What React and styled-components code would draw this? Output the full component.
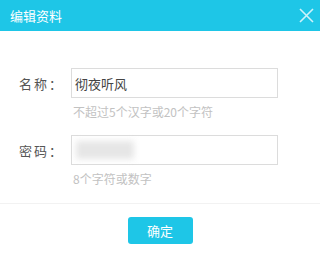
import React from 'react';
import styled, { createGlobalStyle } from 'styled-components';

const Global = createGlobalStyle`
  body{
    margin:0;
    font-family:"Microsoft YaHei","Noto Sans CJK SC",sans-serif;
    background:#fff;
  }
`;

const Dialog = styled.div`
  width:320px;
  height:255px;
  background:#fff;
  display:flex;
  flex-direction:column;
`;

const Header = styled.div`
  height:31px;
  background:#1ec6e7;
  display:flex;
  align-items:center;
  justify-content:space-between;
  padding:0 6px 0 10px;
  color:#fff;
  font-size:13px;
`;

const Close = styled.div`
  width:16px;
  height:16px;
  display:flex;
  align-items:center;
  justify-content:center;
  svg{display:block;}
`;

const Form = styled.div`
  padding-top:37px;
  display:flex;
  flex-direction:column;
  gap:16px;
  border-bottom:1px solid #f2f2f2;
  box-sizing:border-box;
  height:173px;
`;

const Field = styled.div`
  display:grid;
  grid-template-columns:71px 207px;
  row-gap:7px;
`;

const Label = styled.label`
  font-size:13px;
  color:#555;
  display:flex;
  align-items:center;
  justify-content:flex-end;
  padding-right:7px;
  letter-spacing:2px;
`;

const Input = styled.div`
  height:30px;
  box-sizing:border-box;
  border:1px solid #dcdcdc;
  display:flex;
  align-items:center;
  padding-left:3px;
  font-size:13px;
  color:#444;
`;

const Blur = styled.div`
  width:58px;
  height:18px;
  margin-left:1px;
  background:#e6e6e6;
  filter:blur(3px);
`;

const Hint = styled.div`
  grid-column:2;
  font-size:12px;
  color:#c2c2c2;
  padding-left:2px;
  line-height:14px;
`;

const Footer = styled.div`
  flex:1;
  display:flex;
  justify-content:center;
  padding-top:13px;
`;

const Button = styled.button`
  width:65px;
  height:27px;
  border:none;
  border-radius:3px;
  background:#1ec6e7;
  color:#fff;
  font-size:13px;
  font-family:inherit;
  padding:0;
`;

export default function App(){
  return (
    <Dialog>
      <Global />
      <Header>
        <span>编辑资料</span>
        <Close>
          <svg width="15" height="15" viewBox="0 0 15 15">
            <path d="M1 1L14 14M14 1L1 14" stroke="#cdf2fa" strokeWidth="1.6" fill="none" />
          </svg>
        </Close>
      </Header>
      <Form>
        <Field>
          <Label>名称：</Label>
          <Input>彻夜听风</Input>
          <Hint>不超过5个汉字或20个字符</Hint>
        </Field>
        <Field>
          <Label>密码：</Label>
          <Input><Blur /></Input>
          <Hint>8个字符或数字</Hint>
        </Field>
      </Form>
      <Footer>
        <Button>确定</Button>
      </Footer>
    </Dialog>
  );
}
